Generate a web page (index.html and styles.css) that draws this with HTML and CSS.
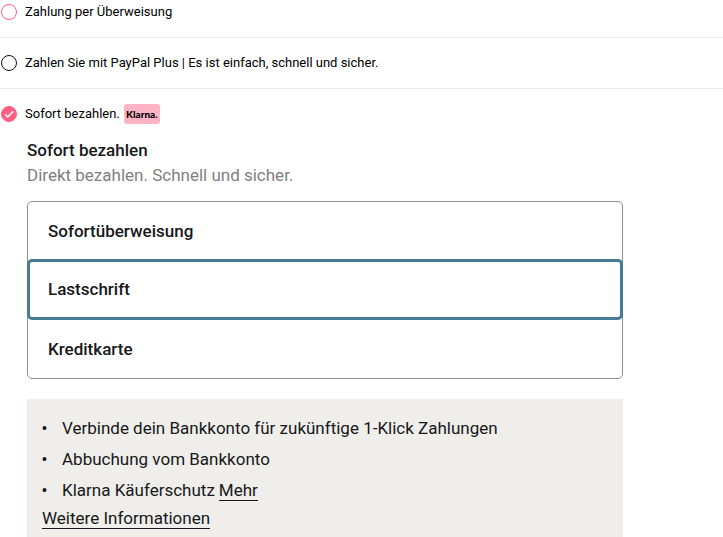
FILE: index.html
```html
<!DOCTYPE html>
<html lang="de">
<head>
<meta charset="utf-8">
<meta name="viewport" content="width=device-width, initial-scale=1">
<title>Zahlungsart</title>
<link rel="stylesheet" href="styles.css">
</head>
<body>
<form class="payment">
  <div class="method">
    <input class="radio radio-accent" type="radio" name="method" id="transfer">
    <label for="transfer">Zahlung per Überweisung</label>
  </div>
  <div class="method">
    <input class="radio" type="radio" name="method" id="paypal">
    <label for="paypal">Zahlen Sie mit PayPal Plus | Es ist einfach, schnell und sicher.</label>
  </div>
  <div class="method">
    <span class="radio-wrap">
      <input class="radio radio-accent" type="radio" name="method" id="klarna" checked>
      <svg class="check" viewBox="0 0 16 16" aria-hidden="true"><path d="M4 8.4 6.7 11 12.2 5.4"/></svg>
    </span>
    <label for="klarna">Sofort bezahlen.</label>
    <span class="badge">Klarna.</span>
  </div>

  <section class="details">
    <h2>Sofort bezahlen</h2>
    <p class="subtitle">Direkt bezahlen. Schnell und sicher.</p>
    <div class="options">
      <label class="option"><input type="radio" name="type">Sofortüberweisung</label>
      <label class="option"><input type="radio" name="type" checked>Lastschrift</label>
      <label class="option"><input type="radio" name="type">Kreditkarte</label>
    </div>
    <div class="info">
      <ul>
        <li>Verbinde dein Bankkonto für zukünftige 1-Klick Zahlungen</li>
        <li>Abbuchung vom Bankkonto</li>
        <li>Klarna Käuferschutz <a href="#">Mehr</a></li>
      </ul>
      <a href="#">Weitere Informationen</a>
    </div>
  </section>
</form>
</body>
</html>
```
FILE: styles.css
```css
* {
  box-sizing: border-box;
}

body {
  margin: 0;
  background: #fff;
  color: #000;
  font-family: Roboto, "Liberation Sans", sans-serif;
  font-size: 13px;
}

.payment {
  display: flex;
  flex-direction: column;
  min-height: 100vh;
}

.method {
  display: flex;
  align-items: center;
  padding: 13px 0 13px 1px;
  border-bottom: 1px solid #ebebeb;
  line-height: 24px;
}

.method:first-child {
  padding-top: 0;
}

.method:nth-child(3) {
  padding-bottom: 12px;
  border-bottom: 0;
}

.method label {
  margin-left: 8px;
}

.radio {
  appearance: none;
  display: block;
  width: 16px;
  height: 16px;
  margin: 0;
  border: 1px solid #111;
  border-radius: 50%;
  background: #fff;
}

.radio-accent {
  border-color: #ff5f82;
}

.radio-accent:checked {
  background: #ff5f82;
}

.radio-wrap {
  display: grid;
}

.radio-wrap > * {
  grid-area: 1 / 1;
}

.check {
  width: 16px;
  height: 16px;
  fill: none;
  stroke: #fff;
  stroke-width: 1.5;
  pointer-events: none;
}

.badge {
  width: 36px;
  height: 20px;
  margin-left: 4px;
  border-radius: 3px;
  background: #ffb3c7;
  font-family: Lato, sans-serif;
  font-size: 10px;
  font-weight: 900;
  line-height: 20px;
  text-align: center;
}

.details {
  display: flex;
  flex: 1;
  flex-direction: column;
  margin: 0 100px 0 27px;
  color: #17181a;
  font-size: 17px;
  line-height: 25px;
}

h2,
.subtitle {
  margin: 0;
  font-size: 17px;
}

h2 {
  font-weight: 500;
}

.subtitle {
  color: #808080;
}

.options {
  display: flex;
  flex-direction: column;
  margin-top: 13px;
  border: 1px solid #8e8e8e;
  border-radius: 5px;
}

.option {
  display: flex;
  align-items: center;
  height: 58px;
  padding: 0 20px;
  font-weight: 500;
}

.option:has(:checked) {
  height: 61px;
  margin: -1px -1px 0;
  padding: 0 18px;
  border: 3px solid #467b93;
  border-radius: 5px;
}

.option input {
  appearance: none;
  width: 0;
  height: 0;
  margin: 0;
}

.info {
  flex: 1;
  margin-top: 20px;
  padding: 14px 15px 5px;
  background: #efeeea;
}

.info ul {
  margin: 0;
  padding: 0;
  list-style: none;
}

.info li {
  display: flex;
  gap: 4px;
  margin-bottom: 1px;
  line-height: 30px;
}

.info li::before {
  width: 16px;
  content: "•";
  font-family: "Liberation Sans", sans-serif;
  font-size: 14px;
}

.info a {
  border-bottom: 1px solid #17181a;
  color: inherit;
  line-height: 20px;
  text-decoration: none;
}

.info li a {
  align-self: center;
}
```
